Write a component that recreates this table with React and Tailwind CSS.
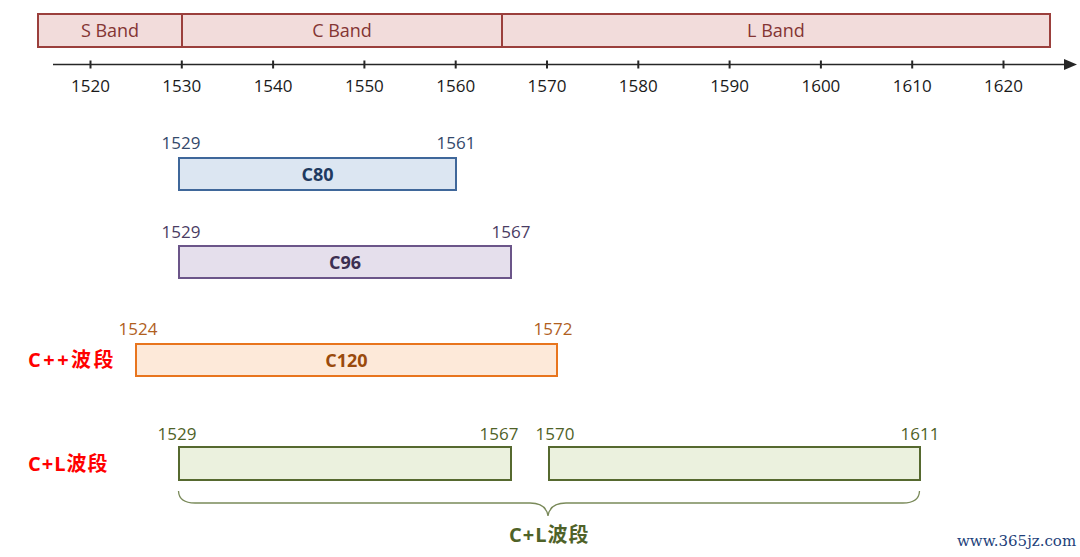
import React from 'react';

const ticks = [1520, 1530, 1540, 1550, 1560, 1570, 1580, 1590, 1600, 1610, 1620];
const tickX = (v) => 90.5 + (v - 1520) * 9.13;

// wavelength bars, pixel positions read off the figure
const bars = [
    { name: 'C80', left: 178, right: 456, top: 157, labelTop: 133, labels: [[181, '1529'], [456, '1561']], box: 'bg-[#dce6f2] border-[#3f679a]', text: 'text-[#1f3a60]', num: 'text-[#34496b]' },
    { name: 'C96', left: 178, right: 511, top: 245, labelTop: 222, labels: [[181, '1529'], [511, '1567']], box: 'bg-[#e5dfec] border-[#6b5589]', text: 'text-[#3c2f52]', num: 'text-[#4a3c63]' },
    { name: 'C120', left: 135, right: 557, top: 343, labelTop: 319, labels: [[138, '1524'], [553, '1572']], box: 'bg-[#fde9d9] border-[#e8751e]', text: 'text-[#9a4a0c]', num: 'text-[#b0601e]' },
];

function Num({ cx, top, color, children }) {
    return (
        <div className={`absolute w-[60px] -ml-[30px] text-center text-[17px] leading-[20px] ${color}`} style={{ left: cx, top }}>
            {children}
        </div>
    );
}

export default function App() {
    return (
        <div className="relative w-[1080px] h-[557px] bg-white overflow-hidden" style={{ fontFamily: '"Open Sans", "Noto Sans CJK SC", sans-serif' }}>
            {/* band header */}
            <div className="absolute left-[37px] top-[13px] w-[1014px] h-[35px] flex border-2 border-[#9b3f3c] bg-[#f2dcdb] text-[#843533] text-[18px]">
                <div className="w-[144px] flex items-center justify-center border-r-2 border-[#9b3f3c]">S Band</div>
                <div className="w-[320px] flex items-center justify-center border-r-2 border-[#9b3f3c]">C Band</div>
                <div className="flex-1 flex items-center justify-center">L Band</div>
            </div>

            {/* axis */}
            <svg className="absolute left-0 top-0" width="1080" height="80">
                <line x1="53" y1="64.5" x2="1066" y2="64.5" stroke="#262626" strokeWidth="1.5" />
                <polygon points="1064,59 1077,64.5 1064,70" fill="#262626" />
                {ticks.map((t) => (
                    <line key={t} x1={tickX(t)} y1="60.5" x2={tickX(t)} y2="68.5" stroke="#262626" strokeWidth="2" />
                ))}
            </svg>
            {ticks.map((t) => (
                <Num key={t} cx={tickX(t)} top={76} color="text-[#1a1a1a]">{t}</Num>
            ))}

            {bars.map((b) => (
                <React.Fragment key={b.name}>
                    {b.labels.map(([cx, v]) => (
                        <Num key={v} cx={cx} top={b.labelTop} color={b.num}>{v}</Num>
                    ))}
                    <div
                        className={`absolute h-[34px] border-2 flex items-center justify-center font-bold text-[18px] ${b.box} ${b.text}`}
                        style={{ left: b.left, top: b.top, width: b.right - b.left + 1 }}
                    >
                        {b.name}
                    </div>
                </React.Fragment>
            ))}

            <div className="absolute left-[28px] top-[346px] text-[#ff0000] font-bold text-[20px] leading-[28px] tracking-[2.5px]">C++波段</div>
            <div className="absolute left-[28px] top-[450px] text-[#ff0000] font-bold text-[20px] leading-[28px] tracking-[1px]">C+L波段</div>

            {/* C+L */}
            <Num cx={177} top={424} color="text-[#4f6228]">1529</Num>
            <Num cx={499} top={424} color="text-[#4f6228]">1567</Num>
            <Num cx={555} top={424} color="text-[#4f6228]">1570</Num>
            <Num cx={920} top={424} color="text-[#4f6228]">1611</Num>
            <div className="absolute left-[178px] top-[446px] w-[334px] h-[35px] border-2 border-[#56692f] bg-[#ebf1de]" />
            <div className="absolute left-[548px] top-[446px] w-[373px] h-[35px] border-2 border-[#56692f] bg-[#ebf1de]" />

            <svg className="absolute left-0 top-0 pointer-events-none" width="1080" height="557">
                <path
                    d="M178.5 491 Q179 503 195 503 L530 503 Q546 503 548 516 Q550 503 566 503 L903 503 Q919 503 919.5 491"
                    fill="none"
                    stroke="#7a8a5a"
                    strokeWidth="1.3"
                />
            </svg>
            <div className="absolute left-[509px] top-[521px] text-[#4f6228] font-bold text-[20px] leading-[28px] tracking-[1px]">C+L波段</div>

            <div className="absolute left-[957px] top-[531px] text-[#1e3f7a] text-[15px] leading-[20px]" style={{ fontFamily: '"DejaVu Serif", serif' }}>
                www.365jz.com
            </div>
        </div>
    );
}
